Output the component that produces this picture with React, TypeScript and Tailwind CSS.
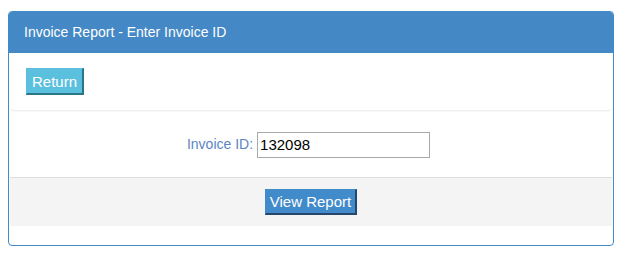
export default function App() {
  return (
    <div className="min-h-screen bg-white pt-[11px] pl-[8px] font-['Liberation_Sans',Arial,sans-serif]">
      <div className="w-[606px] h-[235px] rounded-[4px] border border-[#428bca] bg-white overflow-hidden flex flex-col">
        {/* Header */}
        <div className="h-[41px] bg-[#4488c6] flex items-center px-[15px] text-white text-[14px]">
          Invoice Report - Enter Invoice ID
        </div>

        {/* Toolbar */}
        <div className="h-[58px] mx-px border-b border-[#eeeeee] rounded-b-[4px] shadow-[0_1px_1px_rgba(0,0,0,0.03)] px-[16px] pt-[15px]">
          <button className="h-[27px] px-[5px] bg-[#5bc0de] text-white text-[15px] leading-none border-t border-l border-[#5bc0de] border-r-2 border-b-2 border-r-[#2a7588] border-b-[#2a7588]">
            Return
          </button>
        </div>

        {/* Form row */}
        <div className="h-[66px] flex items-center justify-center gap-[4px] pt-[1px] pr-[5px]">
          <label className="text-[14px] text-[#5b84c3]">Invoice ID:</label>
          <input
            defaultValue="132098"
            className="w-[173px] h-[26px] border border-[#a9a9a9] px-[2px] text-[15px] text-black outline-none"
          />
        </div>

        {/* Footer */}
        <div className="h-[49px] mx-px bg-[#f4f4f4] border-t border-[#dddddd] flex items-center justify-center">
          <button className="h-[26px] px-[4px] bg-[#428bca] text-white text-[15px] leading-none border-t border-l border-[#428bca] border-r-2 border-b-2 border-r-[#26466a] border-b-[#26466a]">
            View Report
          </button>
        </div>
      </div>
    </div>
  );
}
